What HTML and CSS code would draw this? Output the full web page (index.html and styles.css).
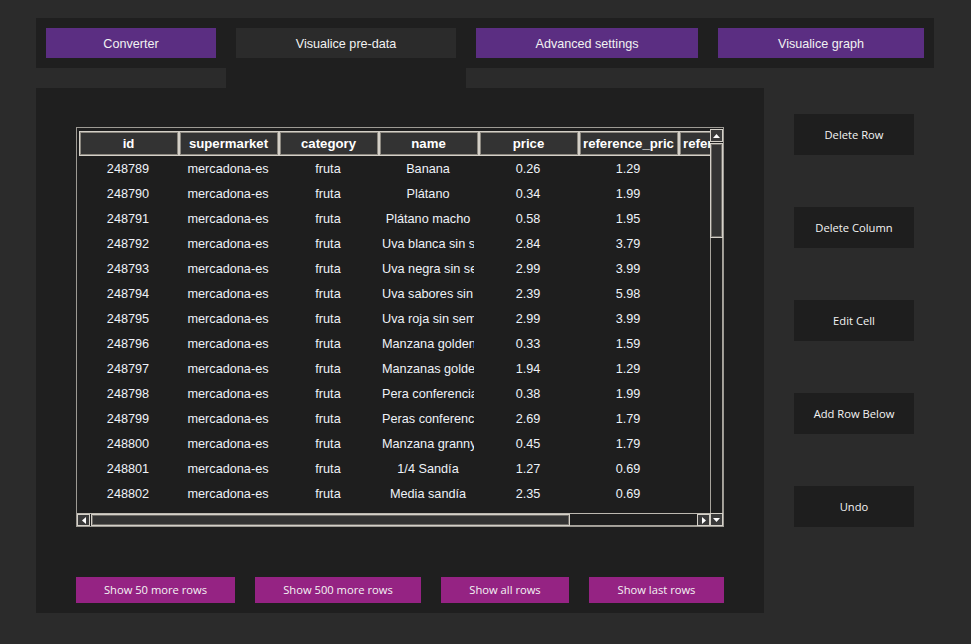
FILE: index.html
```html
<!DOCTYPE html>
<html lang="es">
<head>
<meta charset="utf-8">
<title>Visualice pre-data</title>
<link rel="stylesheet" href="styles.css">
</head>
<body>
<div class="app">
  <div class="topbar">
    <div class="tab tab-purple tab-w1">Converter</div>
    <div class="tab tab-active tab-w2">Visualice pre-data</div>
    <div class="tab tab-purple tab-w3">Advanced settings</div>
    <div class="tab tab-purple tab-w4">Visualice graph</div>
  </div>
  <div class="connector"><div class="connector-dark"></div></div>
  <div class="main">
    <div class="panel">
      <div class="table-frame">
        <div class="viewport">
          <div class="row header">
            <div class="hcell"><span class="hlabel">id</span></div>
            <div class="hcell"><span class="hlabel">supermarket</span></div>
            <div class="hcell"><span class="hlabel">category</span></div>
            <div class="hcell"><span class="hlabel">name</span></div>
            <div class="hcell"><span class="hlabel">price</span></div>
            <div class="hcell"><span class="hlabel">reference_price</span></div>
            <div class="hcell"><span class="hlabel">reference_unit</span></div>
          </div>
          <div class="row"><div class="cell">248789</div><div class="cell">mercadona-es</div><div class="cell">fruta</div><div class="cell">Banana</div><div class="cell">0.26</div><div class="cell">1.29</div><div class="cell"></div></div>
          <div class="row"><div class="cell">248790</div><div class="cell">mercadona-es</div><div class="cell">fruta</div><div class="cell">Plátano</div><div class="cell">0.34</div><div class="cell">1.99</div><div class="cell"></div></div>
          <div class="row"><div class="cell">248791</div><div class="cell">mercadona-es</div><div class="cell">fruta</div><div class="cell">Plátano macho</div><div class="cell">0.58</div><div class="cell">1.95</div><div class="cell"></div></div>
          <div class="row"><div class="cell">248792</div><div class="cell">mercadona-es</div><div class="cell">fruta</div><div class="cell">Uva blanca sin semillas</div><div class="cell">2.84</div><div class="cell">3.79</div><div class="cell"></div></div>
          <div class="row"><div class="cell">248793</div><div class="cell">mercadona-es</div><div class="cell">fruta</div><div class="cell">Uva negra sin semillas</div><div class="cell">2.99</div><div class="cell">3.99</div><div class="cell"></div></div>
          <div class="row"><div class="cell">248794</div><div class="cell">mercadona-es</div><div class="cell">fruta</div><div class="cell">Uva sabores sin semillas</div><div class="cell">2.39</div><div class="cell">5.98</div><div class="cell"></div></div>
          <div class="row"><div class="cell">248795</div><div class="cell">mercadona-es</div><div class="cell">fruta</div><div class="cell">Uva roja sin semillas</div><div class="cell">2.99</div><div class="cell">3.99</div><div class="cell"></div></div>
          <div class="row"><div class="cell">248796</div><div class="cell">mercadona-es</div><div class="cell">fruta</div><div class="cell">Manzana golden</div><div class="cell">0.33</div><div class="cell">1.59</div><div class="cell"></div></div>
          <div class="row"><div class="cell">248797</div><div class="cell">mercadona-es</div><div class="cell">fruta</div><div class="cell">Manzanas golden</div><div class="cell">1.94</div><div class="cell">1.29</div><div class="cell"></div></div>
          <div class="row"><div class="cell">248798</div><div class="cell">mercadona-es</div><div class="cell">fruta</div><div class="cell">Pera conferencia</div><div class="cell">0.38</div><div class="cell">1.99</div><div class="cell"></div></div>
          <div class="row"><div class="cell">248799</div><div class="cell">mercadona-es</div><div class="cell">fruta</div><div class="cell">Peras conferencia</div><div class="cell">2.69</div><div class="cell">1.79</div><div class="cell"></div></div>
          <div class="row"><div class="cell">248800</div><div class="cell">mercadona-es</div><div class="cell">fruta</div><div class="cell">Manzana granny smith</div><div class="cell">0.45</div><div class="cell">1.79</div><div class="cell"></div></div>
          <div class="row"><div class="cell">248801</div><div class="cell">mercadona-es</div><div class="cell">fruta</div><div class="cell">1/4 Sandía</div><div class="cell">1.27</div><div class="cell">0.69</div><div class="cell"></div></div>
          <div class="row"><div class="cell">248802</div><div class="cell">mercadona-es</div><div class="cell">fruta</div><div class="cell">Media sandía</div><div class="cell">2.35</div><div class="cell">0.69</div><div class="cell"></div></div>
        </div>
        <div class="vscroll">
          <div class="sbtn"><svg width="7" height="4" viewBox="0 0 7 4"><path d="M0 4 L3.5 0 L7 4 Z" fill="#fff"/></svg></div>
          <div class="vthumb"></div>
          <div class="vtrack"></div>
          <div class="sbtn"><svg width="7" height="4" viewBox="0 0 7 4"><path d="M0 0 L3.5 4 L7 0 Z" fill="#fff"/></svg></div>
        </div>
        <div class="hscroll">
          <div class="sbtn"><svg width="4" height="7" viewBox="0 0 4 7"><path d="M4 0 L0 3.5 L4 7 Z" fill="#fff"/></svg></div>
          <div class="hthumb"></div>
          <div class="htrack"></div>
          <div class="sbtn"><svg width="4" height="7" viewBox="0 0 4 7"><path d="M0 0 L4 3.5 L0 7 Z" fill="#fff"/></svg></div>
        </div>
      </div>
      <div class="bottom-actions">
        <div class="pbtn pw1">Show 50 more rows</div>
        <div class="pbtn pw2">Show 500 more rows</div>
        <div class="pbtn pw3">Show all rows</div>
        <div class="pbtn pw4">Show last rows</div>
      </div>
    </div>
    <div class="side">
      <div class="sidebtn">Delete Row</div>
      <div class="sidebtn">Delete Column</div>
      <div class="sidebtn">Edit Cell</div>
      <div class="sidebtn">Add Row Below</div>
      <div class="sidebtn">Undo</div>
    </div>
  </div>
</div>
</body>
</html>
```

FILE: styles.css
```css
* { box-sizing: border-box; }
html, body {
  margin: 0;
  padding: 0;
  background: #2b2b2b;
  width: 971px;
  height: 644px;
  overflow: hidden;
}
.app {
  padding: 18px 0 0 36px;
}
.topbar {
  width: 898px;
  height: 50px;
  background: #1f1f1f;
  padding: 10px;
  display: flex;
  gap: 20px;
}
.tab {
  height: 30px;
  padding-top: 2px;
  display: flex;
  align-items: center;
  justify-content: center;
  font-family: "Liberation Sans", Arial, sans-serif;
  font-size: 12.6px;
  color: #f2f2f2;
}
.tab-purple { background: #5b2e82; }
.tab-active { background: #2b2b2b; }
.tab-w1 { width: 170px; }
.tab-w2 { width: 220px; }
.tab-w3 { width: 222px; }
.tab-w4 { width: 206px; }
.connector {
  height: 20px;
}
.connector-dark {
  margin-left: 190px;
  width: 240px;
  height: 20px;
  background: #1f1f1f;
}
.main {
  display: flex;
}
.panel {
  width: 728px;
  height: 525px;
  background: #1f1f1f;
  padding: 39px 0 0 40px;
}
.table-frame {
  width: 648px;
  height: 400px;
  border: 1px solid #9d9a94;
  display: grid;
  grid-template-columns: 633px 13px;
  grid-template-rows: 385px 13px;
  background: #1e1e1e;
}
.viewport {
  grid-column: 1;
  grid-row: 1;
  overflow: hidden;
  padding: 3px 0 0 2px;
}
.row {
  display: flex;
  height: 25px;
  width: max-content;
}
.hcell {
  width: 100px;
  flex: none;
  height: 25px;
  line-height: 23px;
  background: #333333;
  border: 1px solid #d4d0c8;
  box-shadow: inset 0 0 0 1px #8c8880;
  padding: 0 4px 0 3px;
  font-family: "Liberation Sans", Arial, sans-serif;
  font-weight: bold;
  font-size: 13.2px;
  color: #ffffff;
}
.hlabel {
  display: block;
  text-align: center;
  overflow: hidden;
  white-space: nowrap;
}
.cell {
  width: 100px;
  flex: none;
  height: 25px;
  line-height: 25px;
  padding: 1px 0 0 3px;
  border-right: 5px solid transparent;
  text-align: center;
  overflow: hidden;
  white-space: nowrap;
  font-family: "Liberation Sans", Arial, sans-serif;
  font-size: 12.7px;
  color: #eef2f8;
}
.vscroll {
  grid-column: 2;
  grid-row: 1 / 3;
  display: flex;
  flex-direction: column;
  padding-top: 1px;
}
.hscroll {
  grid-column: 1;
  grid-row: 2;
  display: flex;
  border-top: 1px solid #bdb9b1;
}
.sbtn {
  width: 13px;
  height: 13px;
  flex: none;
  background: #3a3a3a;
  border: 1px solid #d4d0c8;
  display: flex;
  align-items: center;
  justify-content: center;
}
.hscroll .sbtn { height: 12px; }
.vthumb {
  height: 95px;
  margin-top: 1px;
  background: #333333;
  border: 1px solid #d4d0c8;
  box-shadow: inset 0 0 0 1px #6e6b66;
  flex: none;
}
.vtrack {
  flex: 1;
  border-left: 1px solid #a8a49c;
  border-right: 1px solid #a8a49c;
  background: #1e1e1e;
}
.hthumb {
  width: 479px;
  margin-left: 1px;
  background: #333333;
  border: 1px solid #d4d0c8;
  box-shadow: inset 0 0 0 1px #6e6b66;
  flex: none;
}
.htrack {
  flex: 1;
  border-bottom: 1px solid #a8a49c;
  background: #1e1e1e;
}
.bottom-actions {
  margin-top: 50px;
  display: flex;
  gap: 20px;
}
.pbtn {
  height: 26px;
  padding-bottom: 1px;
  background: #952383;
  display: flex;
  align-items: center;
  justify-content: center;
  font-family: "Open Sans", "Noto Sans", sans-serif;
  font-size: 11.2px;
  color: #f4f4f4;
}
.pw1 { width: 159px; }
.pw2 { width: 166px; }
.pw3 { width: 128px; }
.pw4 { width: 135px; }
.side {
  margin-left: 30px;
  padding-top: 26px;
  display: flex;
  flex-direction: column;
  gap: 52px;
}
.sidebtn {
  width: 120px;
  height: 41px;
  background: #1e1e1e;
  display: flex;
  align-items: center;
  justify-content: center;
  font-family: "Open Sans", "Noto Sans", sans-serif;
  font-size: 11.2px;
  color: #f4f4f4;
}
```
